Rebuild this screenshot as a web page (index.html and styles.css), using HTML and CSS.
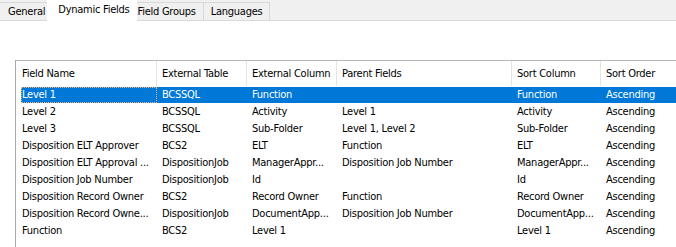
FILE: index.html
```html
<!DOCTYPE html>
<html lang="en">
<head>
  <meta charset="UTF-8">
  <title>Dynamic Fields</title>
  <link rel="stylesheet" href="styles.css">
</head>
<body>

<div class="tabs">
  <div class="tab first">General</div>
  <div class="tab active">Dynamic Fields</div>
  <div class="tab after-active">Field Groups</div>
  <div class="tab">Languages</div>
</div>

<div class="page">
  <div class="list">
    <div class="list-header">
      <div class="col">Field Name</div>
      <div class="col">External Table</div>
      <div class="col">External Column</div>
      <div class="col">Parent Fields</div>
      <div class="col">Sort Column</div>
      <div class="col">Sort Order</div>
    </div>

    <div class="rows">
      <div class="row selected">
        <div class="cell focus">Level 1</div>
        <div class="cell">BCSSQL</div>
        <div class="cell">Function</div>
        <div class="cell"></div>
        <div class="cell">Function</div>
        <div class="cell">Ascending</div>
      </div>
      <div class="row">
        <div class="cell">Level 2</div>
        <div class="cell">BCSSQL</div>
        <div class="cell">Activity</div>
        <div class="cell">Level 1</div>
        <div class="cell">Activity</div>
        <div class="cell">Ascending</div>
      </div>
      <div class="row">
        <div class="cell">Level 3</div>
        <div class="cell">BCSSQL</div>
        <div class="cell">Sub-Folder</div>
        <div class="cell">Level 1, Level 2</div>
        <div class="cell">Sub-Folder</div>
        <div class="cell">Ascending</div>
      </div>
      <div class="row">
        <div class="cell">Disposition ELT Approver</div>
        <div class="cell">BCS2</div>
        <div class="cell">ELT</div>
        <div class="cell">Function</div>
        <div class="cell">ELT</div>
        <div class="cell">Ascending</div>
      </div>
      <div class="row">
        <div class="cell">Disposition ELT Approval ...</div>
        <div class="cell">DispositionJob</div>
        <div class="cell">ManagerAppr...</div>
        <div class="cell">Disposition Job Number</div>
        <div class="cell">ManagerAppr...</div>
        <div class="cell">Ascending</div>
      </div>
      <div class="row">
        <div class="cell">Disposition Job Number</div>
        <div class="cell">DispositionJob</div>
        <div class="cell">Id</div>
        <div class="cell"></div>
        <div class="cell">Id</div>
        <div class="cell">Ascending</div>
      </div>
      <div class="row">
        <div class="cell">Disposition Record Owner</div>
        <div class="cell">BCS2</div>
        <div class="cell">Record Owner</div>
        <div class="cell">Function</div>
        <div class="cell">Record Owner</div>
        <div class="cell">Ascending</div>
      </div>
      <div class="row">
        <div class="cell">Disposition Record Owne...</div>
        <div class="cell">DispositionJob</div>
        <div class="cell">DocumentApp...</div>
        <div class="cell">Disposition Job Number</div>
        <div class="cell">DocumentApp...</div>
        <div class="cell">Ascending</div>
      </div>
      <div class="row">
        <div class="cell">Function</div>
        <div class="cell">BCS2</div>
        <div class="cell">Level 1</div>
        <div class="cell"></div>
        <div class="cell">Level 1</div>
        <div class="cell">Ascending</div>
      </div>
    </div>
  </div>
</div>

</body>
</html>
```

FILE: styles.css
```css
body {
  margin: 0;
  font-family: "DejaVu Sans Condensed", "DejaVu Sans", sans-serif;
  font-size: 11px;
  letter-spacing: -0.25px;
  color: #000;
  background-color: #ffffff;
  overflow: hidden;
  height: 247px;
}

.tabs {
  display: flex;
  align-items: flex-end;
  height: 20px;
  background-color: #f0f0f0;
  border-bottom: 1px solid #dadada;
}

.tab {
  height: 17px;
  line-height: 17px;
  padding: 0 7px;
  border: 1px solid #d9d9d9;
  border-bottom: none;
  margin-left: -1px;
  background-color: #f0f0f0;
  white-space: nowrap;
}

.tab.first {
  margin-left: 0;
  border-left: none;
  padding: 0 4px 0 8px;
}

.tab.after-active {
  padding-left: 3px;
}

.tab.active {
  height: 21px;
  line-height: 19px;
  margin: 0 -3px -1px -3px;
  padding: 0 7px 0 10px;
  background-color: #ffffff;
  border-color: #ffffff;
  position: relative;
  z-index: 1;
}

.page {
  padding: 39px 0 0 15px;
}

.list {
  border-top: 1px solid #b9b9b9;
  border-left: 1px solid #a9a9a9;
  height: 186px;
}

.list-header {
  display: grid;
  grid-template-columns: 141px 90px 90px 175px 89px 1fr;
  height: 25px;
  align-items: stretch;
}

.col {
  display: flex;
  align-items: center;
  padding-left: 5px;
  border-right: 1px solid #e5e5e5;
  white-space: nowrap;
}

.col:first-child {
  padding-left: 6px;
}

.col:last-child {
  border-right: none;
}

.rows {
  padding: 1px 0 0 5px;
}

.row {
  display: grid;
  grid-template-columns: 136px 90px 90px 175px 89px 1fr;
  height: 17px;
  line-height: 16px;
}

.cell {
  padding-left: 5px;
  white-space: nowrap;
  overflow: hidden;
}

.cell:first-child {
  padding-left: 1px;
}

.row.selected {
  background-color: #0078d7;
  color: #ffffff;
  height: 16px;
  margin-bottom: 1px;
}

.cell.focus {
  outline: 1px dotted #f0b27a;
  outline-offset: -1px;
}
```
